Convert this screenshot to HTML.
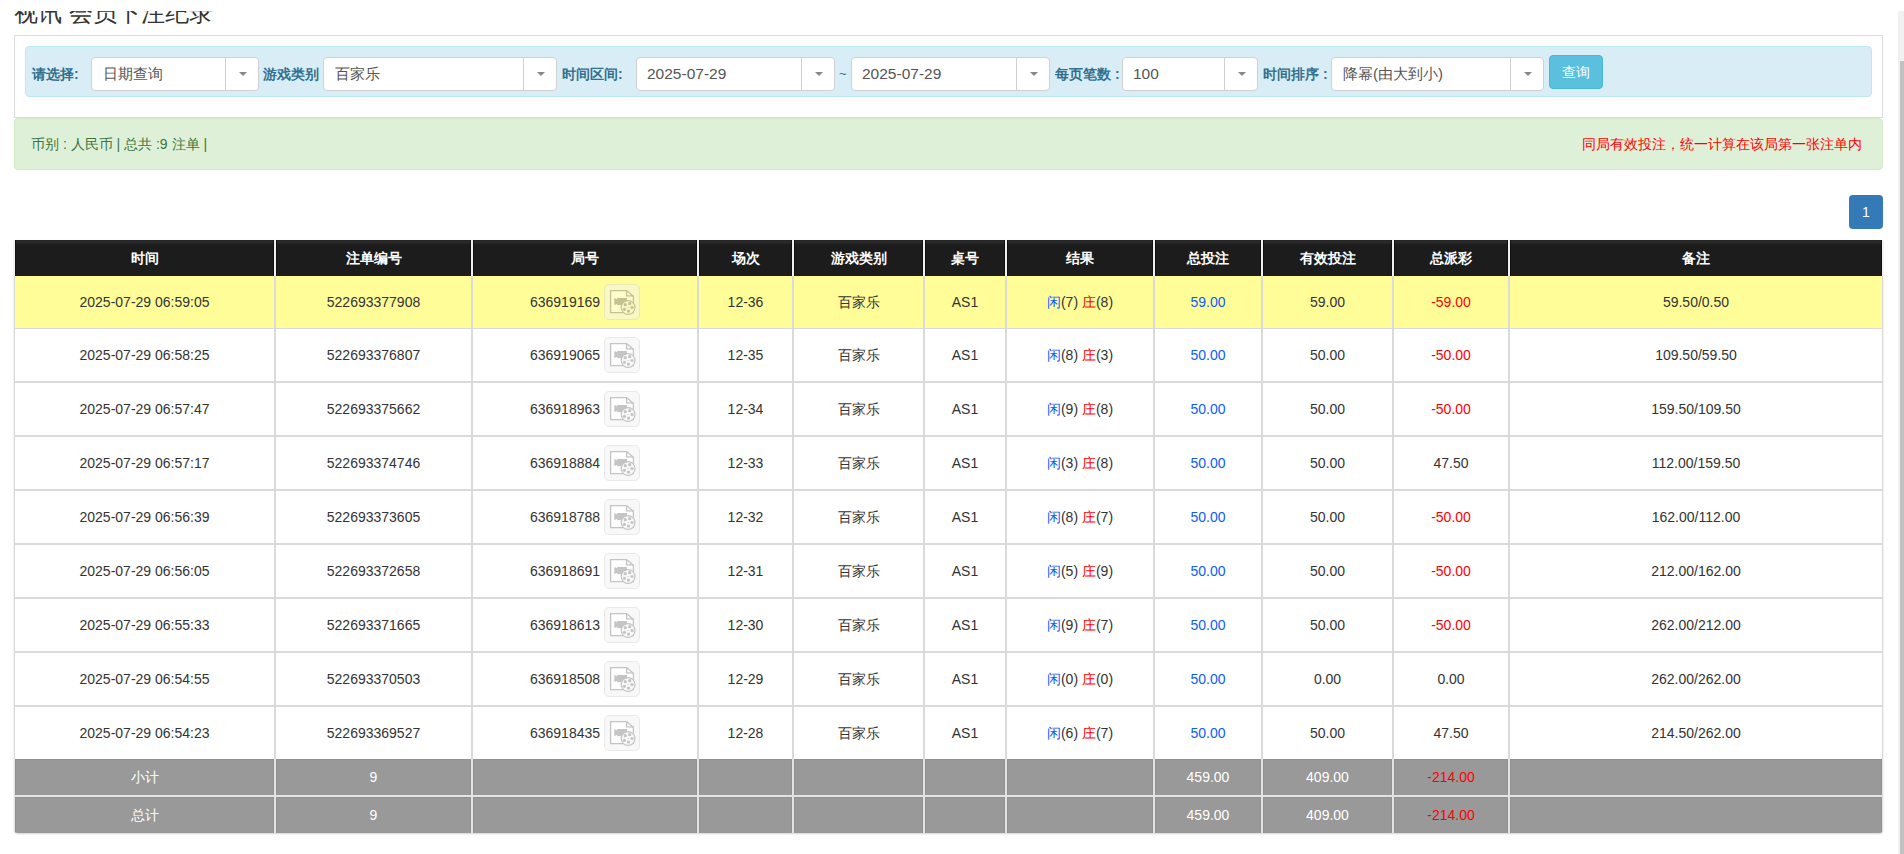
<!DOCTYPE html>
<html><head><meta charset="utf-8"><title>视讯会员下注纪录</title>
<style>
*{box-sizing:border-box}
html,body{margin:0;padding:0;background:#fff;overflow:hidden}
body{width:1904px;height:854px;position:relative;font-family:"Liberation Sans",sans-serif;font-size:14px;color:#333}
.abs{position:absolute}
#title{left:14px;top:-2px;font-size:24px;line-height:30px;color:#333;white-space:nowrap}
#topcover{left:0;top:0;width:1904px;height:11px;background:#fff;z-index:5}
#sbtrack{left:1898px;top:11px;width:6px;height:843px;background:#f1f1f1;z-index:6}
#sbthumb{left:1900px;top:61px;width:4px;height:793px;background:#c1c1c1;z-index:7}
#box{left:14px;top:35px;width:1869px;height:83px;border:1px solid #ddd;background:#fff}
#info{left:25px;top:46px;width:1847px;height:51px;background:#d9edf7;border:1px solid #bce8f1;border-radius:4px}
.lbl{font-size:14px;font-weight:bold;color:#31708f;line-height:20px;top:64px;white-space:nowrap}
.sel{top:57px;height:34px;background:#fff;border:1px solid #d0d0d0;border-radius:4px}
.sel .t{position:absolute;left:11px;top:6px;line-height:20px;font-size:15.5px;color:#555;white-space:nowrap}
.sel .d{position:absolute;top:0;bottom:0;width:1px;background:#d0d0d0}
.sel .a{position:absolute;top:14px;width:0;height:0;border-left:4px solid transparent;border-right:4px solid transparent;border-top:4px solid #888}
#btn{left:1549px;top:55px;width:54px;height:34px;background:#5bc0de;border:1px solid #46b8da;border-radius:4px;color:#fff;font-size:14px;line-height:32px;text-align:center}
#succ{left:14px;top:118px;width:1869px;height:52px;background:#dff0d8;border:1px solid #d6e9c6;border-radius:4px}
#succ .l{position:absolute;left:16px;top:15px;line-height:20px;font-size:14px;color:#3c763d;white-space:nowrap}
#succ .r{position:absolute;right:20px;top:15px;line-height:20px;font-size:14px;color:#f00;white-space:nowrap}
#page1{left:1849px;top:195px;width:34px;height:34px;background:#337ab7;border-radius:4px;color:#fff;font-size:14px;line-height:34px;text-align:center}
#tbl{left:14px;top:240px;width:1869px;height:593px;background:#dadada;box-shadow:0 1px 2px rgba(0,0,0,.18);border-radius:0 0 4px 4px;overflow:hidden}
.c{position:absolute;display:flex;align-items:center;justify-content:center;white-space:nowrap;line-height:20px}
.h{background:#1c1c1c;color:#fff;font-weight:bold;border-left:1px solid #111;border-right:1px solid #111;background-image:linear-gradient(#232323,#2b2b2b 2px,#1c1c1c 5px)}
.g{background:#999;color:#fff;border:1px solid #919191;border-bottom:none;padding-bottom:2px}
.w{background:#fff}
.y{background:#fffd98}
.b{color:#0a5cff}
.rd{color:#f00}
.ic{display:inline-block;width:36px;height:36px;margin:-8px 0 -8px 4px;vertical-align:middle;top:-1px;border:1px solid #d5d5d5;border-radius:5px;background:#f3f3f3;opacity:.5;position:relative}
.ic svg{position:absolute;left:-1px;top:-1px}
</style></head><body>
<div id="title" class="abs">视讯 会员下注纪录</div>
<div id="topcover" class="abs"></div>
<div id="sbtrack" class="abs"></div>
<div id="sbthumb" class="abs"></div>
<div id="box" class="abs"></div>
<div id="info" class="abs"></div>

<div class="abs lbl" style="left:32px">请选择:</div>
<div class="abs lbl" style="left:263px">游戏类别</div>
<div class="abs lbl" style="left:562px">时间区间:</div>
<div class="abs lbl" style="left:1055px">每页笔数 :</div>
<div class="abs lbl" style="left:1263px">时间排序 :</div>
<div class="abs" style="left:839px;top:64px;line-height:20px;font-size:13px;color:#31708f">~</div>
<div class="abs sel" style="left:91px;width:168px"><span class="t" style="font-size:15px;left:11px">日期查询</span><span class="d" style="left:133px"></span><span class="a" style="left:147px"></span></div>
<div class="abs sel" style="left:323px;width:234px"><span class="t" style="font-size:15px;left:11px">百家乐</span><span class="d" style="left:199px"></span><span class="a" style="left:213px"></span></div>
<div class="abs sel" style="left:636px;width:199px"><span class="t" style="font-size:15.5px;left:10px">2025-07-29</span><span class="d" style="left:164px"></span><span class="a" style="left:178px"></span></div>
<div class="abs sel" style="left:851px;width:199px"><span class="t" style="font-size:15.5px;left:10px">2025-07-29</span><span class="d" style="left:164px"></span><span class="a" style="left:178px"></span></div>
<div class="abs sel" style="left:1122px;width:136px"><span class="t" style="font-size:15.5px;left:10px">100</span><span class="d" style="left:101px"></span><span class="a" style="left:115px"></span></div>
<div class="abs sel" style="left:1331px;width:213px"><span class="t" style="font-size:15px;left:11px">降幂(由大到小)</span><span class="d" style="left:178px"></span><span class="a" style="left:192px"></span></div>
<div id="btn" class="abs">查询</div>
<div id="succ" class="abs"><span class="l">币别 : 人民币 | 总共 :9 注单 |</span><span class="r">同局有效投注，统一计算在该局第一张注单内</span></div>
<div id="page1" class="abs">1</div>
<div id="tbl" class="abs">
<div style="position:absolute;left:0;top:0;width:1869px;height:36px;background:#f0f0f0"></div>
<div class="c h" style="left:1px;top:0px;width:259px;height:36px"><span>时间</span></div>
<div class="c h" style="left:262px;top:0px;width:195px;height:36px"><span>注单编号</span></div>
<div class="c h" style="left:459px;top:0px;width:224px;height:36px"><span>局号</span></div>
<div class="c h" style="left:685px;top:0px;width:93px;height:36px"><span>场次</span></div>
<div class="c h" style="left:780px;top:0px;width:129px;height:36px"><span>游戏类别</span></div>
<div class="c h" style="left:911px;top:0px;width:80px;height:36px"><span>桌号</span></div>
<div class="c h" style="left:993px;top:0px;width:146px;height:36px"><span>结果</span></div>
<div class="c h" style="left:1141px;top:0px;width:106px;height:36px"><span>总投注</span></div>
<div class="c h" style="left:1249px;top:0px;width:129px;height:36px"><span>有效投注</span></div>
<div class="c h" style="left:1380px;top:0px;width:114px;height:36px"><span>总派彩</span></div>
<div class="c h" style="left:1496px;top:0px;width:372px;height:36px"><span>备注</span></div>
<div class="c y" style="left:1px;top:36px;width:259px;height:52px"><span>2025-07-29 06:59:05</span></div>
<div class="c y" style="left:262px;top:36px;width:195px;height:52px"><span>522693377908</span></div>
<div class="c y" style="left:459px;top:36px;width:224px;height:52px"><span><span style="position:relative;top:1px">636919169</span><span class="ic"><svg width="36" height="36" viewBox="0 0 36 36"><path d="M6.6 6.6H22.6L29.4 12.4V28.6H6.6Z" fill="#fff" stroke="#8a8a8a" stroke-width="1.3"/><path d="M22.6 6.6V11.8H29.4" fill="none" stroke="#8a8a8a" stroke-width="1.3"/><g fill="#8a8a8a"><path d="M13.2 14H23V21.1H13.2Z"/><path d="M10.3 14L13.6 15.4V19.7L10.3 21.1Z"/></g><circle cx="24.1" cy="23.5" r="6.9" fill="#f3f3f3" stroke="#8a8a8a" stroke-width="1.2"/><g fill="#8a8a8a"><circle cx="21.3" cy="20.7" r="1.6"/><circle cx="25.7" cy="19.7" r="1.6"/><circle cx="28" cy="23.5" r="1.6"/><circle cx="24.5" cy="27.1" r="1.6"/><circle cx="20.4" cy="25.3" r="1.6"/><circle cx="24.1" cy="23.5" r=".6"/></g></svg></span></span></div>
<div class="c y" style="left:685px;top:36px;width:93px;height:52px"><span>12-36</span></div>
<div class="c y" style="left:780px;top:36px;width:129px;height:52px"><span>百家乐</span></div>
<div class="c y" style="left:911px;top:36px;width:80px;height:52px"><span>AS1</span></div>
<div class="c y" style="left:993px;top:36px;width:146px;height:52px"><span><span class="b">闲</span>(7) <span class="rd">庄</span>(8)</span></div>
<div class="c y" style="left:1141px;top:36px;width:106px;height:52px"><span><span class="b">59.00</span></span></div>
<div class="c y" style="left:1249px;top:36px;width:129px;height:52px"><span>59.00</span></div>
<div class="c y" style="left:1380px;top:36px;width:114px;height:52px"><span><span class="rd">-59.00</span></span></div>
<div class="c y" style="left:1496px;top:36px;width:372px;height:52px"><span>59.50/0.50</span></div>
<div class="c w" style="left:1px;top:89px;width:259px;height:52px"><span>2025-07-29 06:58:25</span></div>
<div class="c w" style="left:262px;top:89px;width:195px;height:52px"><span>522693376807</span></div>
<div class="c w" style="left:459px;top:89px;width:224px;height:52px"><span><span style="position:relative;top:1px">636919065</span><span class="ic"><svg width="36" height="36" viewBox="0 0 36 36"><path d="M6.6 6.6H22.6L29.4 12.4V28.6H6.6Z" fill="#fff" stroke="#8a8a8a" stroke-width="1.3"/><path d="M22.6 6.6V11.8H29.4" fill="none" stroke="#8a8a8a" stroke-width="1.3"/><g fill="#8a8a8a"><path d="M13.2 14H23V21.1H13.2Z"/><path d="M10.3 14L13.6 15.4V19.7L10.3 21.1Z"/></g><circle cx="24.1" cy="23.5" r="6.9" fill="#f3f3f3" stroke="#8a8a8a" stroke-width="1.2"/><g fill="#8a8a8a"><circle cx="21.3" cy="20.7" r="1.6"/><circle cx="25.7" cy="19.7" r="1.6"/><circle cx="28" cy="23.5" r="1.6"/><circle cx="24.5" cy="27.1" r="1.6"/><circle cx="20.4" cy="25.3" r="1.6"/><circle cx="24.1" cy="23.5" r=".6"/></g></svg></span></span></div>
<div class="c w" style="left:685px;top:89px;width:93px;height:52px"><span>12-35</span></div>
<div class="c w" style="left:780px;top:89px;width:129px;height:52px"><span>百家乐</span></div>
<div class="c w" style="left:911px;top:89px;width:80px;height:52px"><span>AS1</span></div>
<div class="c w" style="left:993px;top:89px;width:146px;height:52px"><span><span class="b">闲</span>(8) <span class="rd">庄</span>(3)</span></div>
<div class="c w" style="left:1141px;top:89px;width:106px;height:52px"><span><span class="b">50.00</span></span></div>
<div class="c w" style="left:1249px;top:89px;width:129px;height:52px"><span>50.00</span></div>
<div class="c w" style="left:1380px;top:89px;width:114px;height:52px"><span><span class="rd">-50.00</span></span></div>
<div class="c w" style="left:1496px;top:89px;width:372px;height:52px"><span>109.50/59.50</span></div>
<div class="c w" style="left:1px;top:143px;width:259px;height:52px"><span>2025-07-29 06:57:47</span></div>
<div class="c w" style="left:262px;top:143px;width:195px;height:52px"><span>522693375662</span></div>
<div class="c w" style="left:459px;top:143px;width:224px;height:52px"><span><span style="position:relative;top:1px">636918963</span><span class="ic"><svg width="36" height="36" viewBox="0 0 36 36"><path d="M6.6 6.6H22.6L29.4 12.4V28.6H6.6Z" fill="#fff" stroke="#8a8a8a" stroke-width="1.3"/><path d="M22.6 6.6V11.8H29.4" fill="none" stroke="#8a8a8a" stroke-width="1.3"/><g fill="#8a8a8a"><path d="M13.2 14H23V21.1H13.2Z"/><path d="M10.3 14L13.6 15.4V19.7L10.3 21.1Z"/></g><circle cx="24.1" cy="23.5" r="6.9" fill="#f3f3f3" stroke="#8a8a8a" stroke-width="1.2"/><g fill="#8a8a8a"><circle cx="21.3" cy="20.7" r="1.6"/><circle cx="25.7" cy="19.7" r="1.6"/><circle cx="28" cy="23.5" r="1.6"/><circle cx="24.5" cy="27.1" r="1.6"/><circle cx="20.4" cy="25.3" r="1.6"/><circle cx="24.1" cy="23.5" r=".6"/></g></svg></span></span></div>
<div class="c w" style="left:685px;top:143px;width:93px;height:52px"><span>12-34</span></div>
<div class="c w" style="left:780px;top:143px;width:129px;height:52px"><span>百家乐</span></div>
<div class="c w" style="left:911px;top:143px;width:80px;height:52px"><span>AS1</span></div>
<div class="c w" style="left:993px;top:143px;width:146px;height:52px"><span><span class="b">闲</span>(9) <span class="rd">庄</span>(8)</span></div>
<div class="c w" style="left:1141px;top:143px;width:106px;height:52px"><span><span class="b">50.00</span></span></div>
<div class="c w" style="left:1249px;top:143px;width:129px;height:52px"><span>50.00</span></div>
<div class="c w" style="left:1380px;top:143px;width:114px;height:52px"><span><span class="rd">-50.00</span></span></div>
<div class="c w" style="left:1496px;top:143px;width:372px;height:52px"><span>159.50/109.50</span></div>
<div class="c w" style="left:1px;top:197px;width:259px;height:52px"><span>2025-07-29 06:57:17</span></div>
<div class="c w" style="left:262px;top:197px;width:195px;height:52px"><span>522693374746</span></div>
<div class="c w" style="left:459px;top:197px;width:224px;height:52px"><span><span style="position:relative;top:1px">636918884</span><span class="ic"><svg width="36" height="36" viewBox="0 0 36 36"><path d="M6.6 6.6H22.6L29.4 12.4V28.6H6.6Z" fill="#fff" stroke="#8a8a8a" stroke-width="1.3"/><path d="M22.6 6.6V11.8H29.4" fill="none" stroke="#8a8a8a" stroke-width="1.3"/><g fill="#8a8a8a"><path d="M13.2 14H23V21.1H13.2Z"/><path d="M10.3 14L13.6 15.4V19.7L10.3 21.1Z"/></g><circle cx="24.1" cy="23.5" r="6.9" fill="#f3f3f3" stroke="#8a8a8a" stroke-width="1.2"/><g fill="#8a8a8a"><circle cx="21.3" cy="20.7" r="1.6"/><circle cx="25.7" cy="19.7" r="1.6"/><circle cx="28" cy="23.5" r="1.6"/><circle cx="24.5" cy="27.1" r="1.6"/><circle cx="20.4" cy="25.3" r="1.6"/><circle cx="24.1" cy="23.5" r=".6"/></g></svg></span></span></div>
<div class="c w" style="left:685px;top:197px;width:93px;height:52px"><span>12-33</span></div>
<div class="c w" style="left:780px;top:197px;width:129px;height:52px"><span>百家乐</span></div>
<div class="c w" style="left:911px;top:197px;width:80px;height:52px"><span>AS1</span></div>
<div class="c w" style="left:993px;top:197px;width:146px;height:52px"><span><span class="b">闲</span>(3) <span class="rd">庄</span>(8)</span></div>
<div class="c w" style="left:1141px;top:197px;width:106px;height:52px"><span><span class="b">50.00</span></span></div>
<div class="c w" style="left:1249px;top:197px;width:129px;height:52px"><span>50.00</span></div>
<div class="c w" style="left:1380px;top:197px;width:114px;height:52px"><span><span class="">47.50</span></span></div>
<div class="c w" style="left:1496px;top:197px;width:372px;height:52px"><span>112.00/159.50</span></div>
<div class="c w" style="left:1px;top:251px;width:259px;height:52px"><span>2025-07-29 06:56:39</span></div>
<div class="c w" style="left:262px;top:251px;width:195px;height:52px"><span>522693373605</span></div>
<div class="c w" style="left:459px;top:251px;width:224px;height:52px"><span><span style="position:relative;top:1px">636918788</span><span class="ic"><svg width="36" height="36" viewBox="0 0 36 36"><path d="M6.6 6.6H22.6L29.4 12.4V28.6H6.6Z" fill="#fff" stroke="#8a8a8a" stroke-width="1.3"/><path d="M22.6 6.6V11.8H29.4" fill="none" stroke="#8a8a8a" stroke-width="1.3"/><g fill="#8a8a8a"><path d="M13.2 14H23V21.1H13.2Z"/><path d="M10.3 14L13.6 15.4V19.7L10.3 21.1Z"/></g><circle cx="24.1" cy="23.5" r="6.9" fill="#f3f3f3" stroke="#8a8a8a" stroke-width="1.2"/><g fill="#8a8a8a"><circle cx="21.3" cy="20.7" r="1.6"/><circle cx="25.7" cy="19.7" r="1.6"/><circle cx="28" cy="23.5" r="1.6"/><circle cx="24.5" cy="27.1" r="1.6"/><circle cx="20.4" cy="25.3" r="1.6"/><circle cx="24.1" cy="23.5" r=".6"/></g></svg></span></span></div>
<div class="c w" style="left:685px;top:251px;width:93px;height:52px"><span>12-32</span></div>
<div class="c w" style="left:780px;top:251px;width:129px;height:52px"><span>百家乐</span></div>
<div class="c w" style="left:911px;top:251px;width:80px;height:52px"><span>AS1</span></div>
<div class="c w" style="left:993px;top:251px;width:146px;height:52px"><span><span class="b">闲</span>(8) <span class="rd">庄</span>(7)</span></div>
<div class="c w" style="left:1141px;top:251px;width:106px;height:52px"><span><span class="b">50.00</span></span></div>
<div class="c w" style="left:1249px;top:251px;width:129px;height:52px"><span>50.00</span></div>
<div class="c w" style="left:1380px;top:251px;width:114px;height:52px"><span><span class="rd">-50.00</span></span></div>
<div class="c w" style="left:1496px;top:251px;width:372px;height:52px"><span>162.00/112.00</span></div>
<div class="c w" style="left:1px;top:305px;width:259px;height:52px"><span>2025-07-29 06:56:05</span></div>
<div class="c w" style="left:262px;top:305px;width:195px;height:52px"><span>522693372658</span></div>
<div class="c w" style="left:459px;top:305px;width:224px;height:52px"><span><span style="position:relative;top:1px">636918691</span><span class="ic"><svg width="36" height="36" viewBox="0 0 36 36"><path d="M6.6 6.6H22.6L29.4 12.4V28.6H6.6Z" fill="#fff" stroke="#8a8a8a" stroke-width="1.3"/><path d="M22.6 6.6V11.8H29.4" fill="none" stroke="#8a8a8a" stroke-width="1.3"/><g fill="#8a8a8a"><path d="M13.2 14H23V21.1H13.2Z"/><path d="M10.3 14L13.6 15.4V19.7L10.3 21.1Z"/></g><circle cx="24.1" cy="23.5" r="6.9" fill="#f3f3f3" stroke="#8a8a8a" stroke-width="1.2"/><g fill="#8a8a8a"><circle cx="21.3" cy="20.7" r="1.6"/><circle cx="25.7" cy="19.7" r="1.6"/><circle cx="28" cy="23.5" r="1.6"/><circle cx="24.5" cy="27.1" r="1.6"/><circle cx="20.4" cy="25.3" r="1.6"/><circle cx="24.1" cy="23.5" r=".6"/></g></svg></span></span></div>
<div class="c w" style="left:685px;top:305px;width:93px;height:52px"><span>12-31</span></div>
<div class="c w" style="left:780px;top:305px;width:129px;height:52px"><span>百家乐</span></div>
<div class="c w" style="left:911px;top:305px;width:80px;height:52px"><span>AS1</span></div>
<div class="c w" style="left:993px;top:305px;width:146px;height:52px"><span><span class="b">闲</span>(5) <span class="rd">庄</span>(9)</span></div>
<div class="c w" style="left:1141px;top:305px;width:106px;height:52px"><span><span class="b">50.00</span></span></div>
<div class="c w" style="left:1249px;top:305px;width:129px;height:52px"><span>50.00</span></div>
<div class="c w" style="left:1380px;top:305px;width:114px;height:52px"><span><span class="rd">-50.00</span></span></div>
<div class="c w" style="left:1496px;top:305px;width:372px;height:52px"><span>212.00/162.00</span></div>
<div class="c w" style="left:1px;top:359px;width:259px;height:52px"><span>2025-07-29 06:55:33</span></div>
<div class="c w" style="left:262px;top:359px;width:195px;height:52px"><span>522693371665</span></div>
<div class="c w" style="left:459px;top:359px;width:224px;height:52px"><span><span style="position:relative;top:1px">636918613</span><span class="ic"><svg width="36" height="36" viewBox="0 0 36 36"><path d="M6.6 6.6H22.6L29.4 12.4V28.6H6.6Z" fill="#fff" stroke="#8a8a8a" stroke-width="1.3"/><path d="M22.6 6.6V11.8H29.4" fill="none" stroke="#8a8a8a" stroke-width="1.3"/><g fill="#8a8a8a"><path d="M13.2 14H23V21.1H13.2Z"/><path d="M10.3 14L13.6 15.4V19.7L10.3 21.1Z"/></g><circle cx="24.1" cy="23.5" r="6.9" fill="#f3f3f3" stroke="#8a8a8a" stroke-width="1.2"/><g fill="#8a8a8a"><circle cx="21.3" cy="20.7" r="1.6"/><circle cx="25.7" cy="19.7" r="1.6"/><circle cx="28" cy="23.5" r="1.6"/><circle cx="24.5" cy="27.1" r="1.6"/><circle cx="20.4" cy="25.3" r="1.6"/><circle cx="24.1" cy="23.5" r=".6"/></g></svg></span></span></div>
<div class="c w" style="left:685px;top:359px;width:93px;height:52px"><span>12-30</span></div>
<div class="c w" style="left:780px;top:359px;width:129px;height:52px"><span>百家乐</span></div>
<div class="c w" style="left:911px;top:359px;width:80px;height:52px"><span>AS1</span></div>
<div class="c w" style="left:993px;top:359px;width:146px;height:52px"><span><span class="b">闲</span>(9) <span class="rd">庄</span>(7)</span></div>
<div class="c w" style="left:1141px;top:359px;width:106px;height:52px"><span><span class="b">50.00</span></span></div>
<div class="c w" style="left:1249px;top:359px;width:129px;height:52px"><span>50.00</span></div>
<div class="c w" style="left:1380px;top:359px;width:114px;height:52px"><span><span class="rd">-50.00</span></span></div>
<div class="c w" style="left:1496px;top:359px;width:372px;height:52px"><span>262.00/212.00</span></div>
<div class="c w" style="left:1px;top:413px;width:259px;height:52px"><span>2025-07-29 06:54:55</span></div>
<div class="c w" style="left:262px;top:413px;width:195px;height:52px"><span>522693370503</span></div>
<div class="c w" style="left:459px;top:413px;width:224px;height:52px"><span><span style="position:relative;top:1px">636918508</span><span class="ic"><svg width="36" height="36" viewBox="0 0 36 36"><path d="M6.6 6.6H22.6L29.4 12.4V28.6H6.6Z" fill="#fff" stroke="#8a8a8a" stroke-width="1.3"/><path d="M22.6 6.6V11.8H29.4" fill="none" stroke="#8a8a8a" stroke-width="1.3"/><g fill="#8a8a8a"><path d="M13.2 14H23V21.1H13.2Z"/><path d="M10.3 14L13.6 15.4V19.7L10.3 21.1Z"/></g><circle cx="24.1" cy="23.5" r="6.9" fill="#f3f3f3" stroke="#8a8a8a" stroke-width="1.2"/><g fill="#8a8a8a"><circle cx="21.3" cy="20.7" r="1.6"/><circle cx="25.7" cy="19.7" r="1.6"/><circle cx="28" cy="23.5" r="1.6"/><circle cx="24.5" cy="27.1" r="1.6"/><circle cx="20.4" cy="25.3" r="1.6"/><circle cx="24.1" cy="23.5" r=".6"/></g></svg></span></span></div>
<div class="c w" style="left:685px;top:413px;width:93px;height:52px"><span>12-29</span></div>
<div class="c w" style="left:780px;top:413px;width:129px;height:52px"><span>百家乐</span></div>
<div class="c w" style="left:911px;top:413px;width:80px;height:52px"><span>AS1</span></div>
<div class="c w" style="left:993px;top:413px;width:146px;height:52px"><span><span class="b">闲</span>(0) <span class="rd">庄</span>(0)</span></div>
<div class="c w" style="left:1141px;top:413px;width:106px;height:52px"><span><span class="b">50.00</span></span></div>
<div class="c w" style="left:1249px;top:413px;width:129px;height:52px"><span>0.00</span></div>
<div class="c w" style="left:1380px;top:413px;width:114px;height:52px"><span><span class="">0.00</span></span></div>
<div class="c w" style="left:1496px;top:413px;width:372px;height:52px"><span>262.00/262.00</span></div>
<div class="c w" style="left:1px;top:467px;width:259px;height:52px"><span>2025-07-29 06:54:23</span></div>
<div class="c w" style="left:262px;top:467px;width:195px;height:52px"><span>522693369527</span></div>
<div class="c w" style="left:459px;top:467px;width:224px;height:52px"><span><span style="position:relative;top:1px">636918435</span><span class="ic"><svg width="36" height="36" viewBox="0 0 36 36"><path d="M6.6 6.6H22.6L29.4 12.4V28.6H6.6Z" fill="#fff" stroke="#8a8a8a" stroke-width="1.3"/><path d="M22.6 6.6V11.8H29.4" fill="none" stroke="#8a8a8a" stroke-width="1.3"/><g fill="#8a8a8a"><path d="M13.2 14H23V21.1H13.2Z"/><path d="M10.3 14L13.6 15.4V19.7L10.3 21.1Z"/></g><circle cx="24.1" cy="23.5" r="6.9" fill="#f3f3f3" stroke="#8a8a8a" stroke-width="1.2"/><g fill="#8a8a8a"><circle cx="21.3" cy="20.7" r="1.6"/><circle cx="25.7" cy="19.7" r="1.6"/><circle cx="28" cy="23.5" r="1.6"/><circle cx="24.5" cy="27.1" r="1.6"/><circle cx="20.4" cy="25.3" r="1.6"/><circle cx="24.1" cy="23.5" r=".6"/></g></svg></span></span></div>
<div class="c w" style="left:685px;top:467px;width:93px;height:52px"><span>12-28</span></div>
<div class="c w" style="left:780px;top:467px;width:129px;height:52px"><span>百家乐</span></div>
<div class="c w" style="left:911px;top:467px;width:80px;height:52px"><span>AS1</span></div>
<div class="c w" style="left:993px;top:467px;width:146px;height:52px"><span><span class="b">闲</span>(6) <span class="rd">庄</span>(7)</span></div>
<div class="c w" style="left:1141px;top:467px;width:106px;height:52px"><span><span class="b">50.00</span></span></div>
<div class="c w" style="left:1249px;top:467px;width:129px;height:52px"><span>50.00</span></div>
<div class="c w" style="left:1380px;top:467px;width:114px;height:52px"><span><span class="">47.50</span></span></div>
<div class="c w" style="left:1496px;top:467px;width:372px;height:52px"><span>214.50/262.00</span></div>
<div style="position:absolute;left:0;top:519px;width:1869px;height:74px;background:#e3e3e3"></div>
<div class="c g" style="left:1px;top:519px;width:259px;height:36px"><span>小计</span></div>
<div class="c g" style="left:262px;top:519px;width:195px;height:36px"><span>9</span></div>
<div class="c g" style="left:459px;top:519px;width:224px;height:36px"><span></span></div>
<div class="c g" style="left:685px;top:519px;width:93px;height:36px"><span></span></div>
<div class="c g" style="left:780px;top:519px;width:129px;height:36px"><span></span></div>
<div class="c g" style="left:911px;top:519px;width:80px;height:36px"><span></span></div>
<div class="c g" style="left:993px;top:519px;width:146px;height:36px"><span></span></div>
<div class="c g" style="left:1141px;top:519px;width:106px;height:36px"><span>459.00</span></div>
<div class="c g" style="left:1249px;top:519px;width:129px;height:36px"><span>409.00</span></div>
<div class="c g" style="left:1380px;top:519px;width:114px;height:36px"><span><span class="rd">-214.00</span></span></div>
<div class="c g" style="left:1496px;top:519px;width:372px;height:36px"><span></span></div>
<div class="c g" style="left:1px;top:557px;width:259px;height:36px"><span>总计</span></div>
<div class="c g" style="left:262px;top:557px;width:195px;height:36px"><span>9</span></div>
<div class="c g" style="left:459px;top:557px;width:224px;height:36px"><span></span></div>
<div class="c g" style="left:685px;top:557px;width:93px;height:36px"><span></span></div>
<div class="c g" style="left:780px;top:557px;width:129px;height:36px"><span></span></div>
<div class="c g" style="left:911px;top:557px;width:80px;height:36px"><span></span></div>
<div class="c g" style="left:993px;top:557px;width:146px;height:36px"><span></span></div>
<div class="c g" style="left:1141px;top:557px;width:106px;height:36px"><span>459.00</span></div>
<div class="c g" style="left:1249px;top:557px;width:129px;height:36px"><span>409.00</span></div>
<div class="c g" style="left:1380px;top:557px;width:114px;height:36px"><span><span class="rd">-214.00</span></span></div>
<div class="c g" style="left:1496px;top:557px;width:372px;height:36px"><span></span></div>
</div>
</body></html>
